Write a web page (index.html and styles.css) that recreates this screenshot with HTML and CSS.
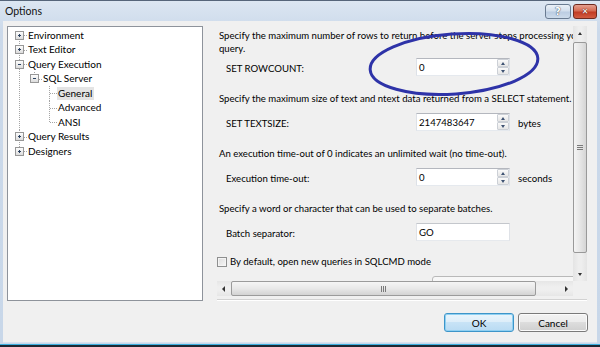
FILE: index.html
```html
<!DOCTYPE html>
<html lang="en">
<head>
    <meta charset="UTF-8">
    <title>Options</title>
    <link rel="stylesheet" href="styles.css">
</head>
<body>

<div class="window">
    <div class="titlebar">
        <span class="title">Options</span>
        <div class="caption-buttons">
            <span class="cap-btn help">?</span>
            <span class="cap-btn close">&#x2715;</span>
        </div>
    </div>

    <div class="client">
        <div class="main">
            <!-- Options tree -->
            <ul class="tree">
                <li><div class="row"><span class="exp plus"></span><span class="label">Environment</span></div></li>
                <li><div class="row"><span class="exp plus"></span><span class="label">Text Editor</span></div></li>
                <li>
                    <div class="row"><span class="exp minus"></span><span class="label">Query Execution</span></div>
                    <ul>
                        <li>
                            <div class="row"><span class="exp minus"></span><span class="label">SQL Server</span></div>
                            <ul>
                                <li><div class="row"><span class="exp"></span><span class="label selected">General</span></div></li>
                                <li><div class="row"><span class="exp"></span><span class="label">Advanced</span></div></li>
                                <li><div class="row"><span class="exp"></span><span class="label">ANSI</span></div></li>
                            </ul>
                        </li>
                    </ul>
                </li>
                <li><div class="row"><span class="exp plus"></span><span class="label">Query Results</span></div></li>
                <li><div class="row"><span class="exp plus"></span><span class="label">Designers</span></div></li>
            </ul>

            <!-- Settings page -->
            <div class="panel">
                <div class="view">
                    <div class="content">
                        <div class="desc first">Specify the maximum number of rows to return before the server stops processing your<br>query.</div>
                        <div class="field first">
                            <span class="field-label">SET ROWCOUNT:</span>
                            <div class="textbox"><span>0</span><span class="spin"><span class="spin-btn"><i class="tri up"></i></span><span class="spin-btn"><i class="tri down"></i></span></span></div>
                        </div>

                        <div class="desc">Specify the maximum size of text and ntext data returned from a SELECT statement.</div>
                        <div class="field">
                            <span class="field-label">SET TEXTSIZE:</span>
                            <div class="textbox"><span>2147483647</span><span class="spin"><span class="spin-btn"><i class="tri up"></i></span><span class="spin-btn"><i class="tri down"></i></span></span></div>
                            <span class="unit">bytes</span>
                        </div>

                        <div class="desc">An execution time-out of 0 indicates an unlimited wait (no time-out).</div>
                        <div class="field">
                            <span class="field-label">Execution time-out:</span>
                            <div class="textbox"><span>0</span><span class="spin"><span class="spin-btn"><i class="tri up"></i></span><span class="spin-btn"><i class="tri down"></i></span></span></div>
                            <span class="unit">seconds</span>
                        </div>

                        <div class="desc">Specify a word or character that can be used to separate batches.</div>
                        <div class="field">
                            <span class="field-label">Batch separator:</span>
                            <div class="textbox plain"><span>GO</span></div>
                        </div>

                        <div class="check-row">
                            <span class="checkbox"></span>
                            <span>By default, open new queries in SQLCMD mode</span>
                        </div>
                        <div class="combo"></div>
                    </div>

                    <div class="vscroll">
                        <span class="sb-btn"><i class="tri up dark"></i></span>
                        <span class="vthumb"><span class="grip-v"></span></span>
                        <span class="sb-fill"></span>
                        <span class="sb-btn"><i class="tri down dark"></i></span>
                    </div>
                </div>

                <div class="hscroll-row">
                    <div class="hscroll">
                        <span class="sb-btn h"><i class="tri left"></i></span>
                        <span class="hthumb"><span class="grip-h"></span></span>
                        <span class="sb-fill"></span>
                        <span class="sb-btn h"><i class="tri right"></i></span>
                    </div>
                    <div class="corner"></div>
                </div>
                <div class="separator"></div>
            </div>
        </div>

        <div class="footer">
            <button class="btn default">OK</button>
            <button class="btn">Cancel</button>
        </div>
    </div>

    <!-- hand-drawn highlight -->
    <svg class="marker" width="190" height="80" viewBox="0 0 190 80">
        <ellipse cx="94" cy="40" rx="84" ry="30" transform="rotate(-4 94 40)" fill="none" stroke="#2e33a8" stroke-width="3"/>
    </svg>
</div>

</body>
</html>
```

FILE: styles.css
```css
* {
    box-sizing: border-box;
}

html, body {
    margin: 0;
    padding: 0;
}

body {
    width: 600px;
    height: 347px;
    overflow: hidden;
    background: #1d2833;
    font-family: Lato, "Noto Sans", sans-serif;
    font-size: 9.6px;
    color: #000;
}

.window {
    position: relative;
    height: 345px;
    display: flex;
    flex-direction: column;
    background: linear-gradient(#dce6f2, #cbd9ea 30px, #c8d7e9);
    border-top: 1px solid #56657a;
    border-bottom: 1px solid #3aaede;
}

/* Title bar */
.titlebar {
    height: 20px;
    display: flex;
    align-items: center;
    padding: 0 3px 0 5px;
}

.title {
    font-size: 10.5px;
    color: #111;
}

.caption-buttons {
    margin-left: auto;
    display: flex;
    gap: 2px;
    align-self: flex-start;
    margin-top: 3px;
}

.cap-btn {
    height: 15px;
    display: flex;
    align-items: center;
    justify-content: center;
    border-radius: 3px;
    font-family: "DejaVu Sans", sans-serif;
    font-weight: bold;
    color: #fff;
}

.cap-btn.help {
    width: 26px;
    border: 1px solid #6a7b91;
    background: linear-gradient(#eaf0f7, #d3dfed 45%, #bccde2 55%, #cddbeb);
    font-size: 10px;
    text-shadow: 0 0 1px #3e4d61, 0 0 1px #3e4d61;
}

.cap-btn.close {
    width: 24px;
    border: 1px solid #6e2a1f;
    background: linear-gradient(#e5a090, #d56b53 45%, #c23c24 55%, #d25c41);
    font-size: 8px;
    text-shadow: 0 0 1px #5a1c12, 0 0 1px #5a1c12;
}

/* Client area */
.client {
    flex: 1;
    margin: 0 3px 1px 3px;
    background: #f0f0f0;
    padding: 5px 10px 0 4px;
    border-bottom: 1px solid #d6e2ef;
    display: flex;
    flex-direction: column;
}

.main {
    display: flex;
    height: 275px;
}

/* Tree view */
.tree, .tree ul {
    list-style: none;
    margin: 0;
    padding: 0;
}

.tree {
    width: 196px;
    flex: none;
    margin-right: 14px;
    background: #fff;
    border: 1px solid #8e939b;
    padding: 1px 0 0 4px;
}

.tree ul {
    padding-left: 15px;
}

.tree li {
    background: repeating-linear-gradient(#a5a5a5 0 1px, transparent 1px 2px) 7px 0 / 1px 100% no-repeat;
}

.tree > li:first-child {
    background-position: 7px 7px;
}

.tree li:last-child {
    background-size: 1px 7px;
}

.row {
    height: 14.5px;
    display: flex;
    align-items: center;
    background: repeating-linear-gradient(to right, #a5a5a5 0 1px, transparent 1px 2px) 8px 7px / 7px 1px no-repeat;
}

.exp {
    width: 15px;
    height: 100%;
    flex: none;
    display: flex;
    align-items: center;
    justify-content: center;
}

.exp.plus::before,
.exp.minus::before {
    content: "";
    width: 7px;
    height: 7px;
    margin-left: -1px;
    border: 1px solid #979797;
    background:
        linear-gradient(#2b4160, #2b4160) center / 3px 1px no-repeat,
        linear-gradient(#fdfdfd, #dcdcdc);
}

.exp.plus::before {
    background:
        linear-gradient(#2b4160, #2b4160) center / 3px 1px no-repeat,
        linear-gradient(#2b4160, #2b4160) center / 1px 3px no-repeat,
        linear-gradient(#fdfdfd, #dcdcdc);
}

.label {
    padding: 0 2px 0 1px;
    line-height: 13px;
    font-size: 10px;
    white-space: nowrap;
}

.label.selected {
    background: #e4e4e4;
}

/* Right panel */
.panel {
    flex: 1;
    display: flex;
    flex-direction: column;
    min-width: 0;
}

.view {
    height: 255px;
    display: flex;
}

.content {
    flex: 1;
    min-width: 0;
    overflow: hidden;
    padding: 3px 0 0 2px;
    white-space: nowrap;
}

.desc {
    line-height: 13px;
    margin-top: 16px;
}

.desc.first {
    margin-top: 0;
}

.field {
    display: flex;
    align-items: center;
    height: 18px;
    margin-top: 8px;
    padding-left: 7px;
}

.field.first {
    margin-top: 3px;
}

.field-label {
    width: 190px;
    flex: none;
    padding-top: 2px;
}

.textbox {
    width: 94px;
    height: 18px;
    flex: none;
    display: flex;
    align-items: center;
    padding-left: 2px;
    background: #fff;
    border: 1px solid;
    border-color: #b4b7be #dde1e7 #e5e9ee #dde1e7;
}

.textbox.plain {
    border-color: #c4c7cc #dfe2e7 #e6e9ed #dfe2e7;
}

.spin {
    margin-left: auto;
    display: flex;
    flex-direction: column;
    height: 16px;
}

.spin-btn {
    width: 12px;
    height: 8px;
    display: flex;
    align-items: center;
    justify-content: center;
    border: 1px solid #ccd0d6;
    border-radius: 1px;
    background: linear-gradient(#fafafa, #e6e6e6);
}

.unit {
    margin-left: 8px;
    padding-top: 2px;
}

.tri {
    width: 0;
    height: 0;
    border: 0 solid transparent;
}

.tri.up {
    border-width: 0 2.5px 3px;
    border-bottom-color: #3e5273;
}

.tri.down {
    border-width: 3px 2.5px 0;
    border-top-color: #3e5273;
}

.tri.left {
    border-width: 3px 3px 3px 0;
    border-right-color: #333;
}

.tri.right {
    border-width: 3px 0 3px 3px;
    border-left-color: #333;
}

.tri.dark.up { border-bottom-color: #333; }
.tri.dark.down { border-top-color: #333; }

.check-row {
    display: flex;
    align-items: center;
    gap: 3px;
    height: 13px;
    margin: 14px 0 0 -2px;
}

.checkbox {
    width: 10px;
    height: 10px;
    border: 1px solid #8e8f8f;
    background: linear-gradient(135deg, #dcdcdc, #f6f6f6);
    box-shadow: inset 0 0 0 1px #f4f4f4;
}

.combo {
    width: 150px;
    height: 20px;
    margin: 8px 0 0 213px;
    border: 1px solid #b9b9b9;
    border-radius: 3px;
    background: #f7f7f7;
}

/* Scroll bars */
.vscroll {
    width: 14px;
    flex: none;
    display: flex;
    flex-direction: column;
    background: linear-gradient(to right, #e4e4e4, #eeeeee 40%, #eeeeee 60%, #e4e4e4);
}

.sb-btn {
    height: 14px;
    flex: none;
    display: flex;
    align-items: center;
    justify-content: center;
}

.sb-btn.h {
    width: 13px;
    height: auto;
}

.sb-fill {
    flex: 1;
}

.vthumb {
    height: 211px;
    margin-top: 2px;
    flex: none;
    display: flex;
    align-items: center;
    justify-content: center;
    border: 1px solid #999;
    border-radius: 2px;
    background: linear-gradient(to right, #f4f4f4, #e6e6e6 50%, #d5d5d5);
}

.grip-v {
    width: 6px;
    height: 5px;
    border-top: 1px solid #7a7a7a;
    border-bottom: 1px solid #7a7a7a;
    background: linear-gradient(#7a7a7a, #7a7a7a) center / 100% 1px no-repeat;
}

.hscroll-row {
    height: 15px;
    display: flex;
}

.hscroll {
    flex: 1;
    display: flex;
    background: linear-gradient(#e6e6e6, #efefef 40%, #efefef 60%, #e6e6e6);
}

.hthumb {
    width: 305px;
    margin-left: 1px;
    flex: none;
    display: flex;
    align-items: center;
    justify-content: center;
    border: 1px solid #9b9b9b;
    border-radius: 2px;
    background: linear-gradient(#f5f5f5, #e8e8e8 50%, #d3d3d3);
}

.grip-h {
    width: 5px;
    height: 6px;
    border-left: 1px solid #7a7a7a;
    border-right: 1px solid #7a7a7a;
    background: linear-gradient(#7a7a7a, #7a7a7a) center / 1px 100% no-repeat;
}

.corner {
    width: 14px;
    background: #f0f0f0;
}

.separator {
    margin-top: 3px;
    border-top: 1px solid #d2d2d2;
    border-bottom: 1px solid #fff;
}

/* Dialog buttons */
.footer {
    display: flex;
    justify-content: flex-end;
    gap: 4px;
    padding-top: 12px;
    margin-right: -1px;
}

.btn {
    width: 70px;
    height: 19px;
    padding: 0;
    font-family: inherit;
    font-size: 10px;
    color: #000;
    border: 1px solid #7a7a7a;
    border-radius: 3px;
    background: linear-gradient(#f3f3f3, #ebebeb 50%, #dddddd 50%, #cfcfcf);
    box-shadow: inset 0 0 0 1px #fbfbfb;
}

.btn.default {
    border-color: #3d95c9;
    background: linear-gradient(#eaf5fc, #dcedf9 50%, #c8e3f6 50%, #b9dbf3);
    box-shadow: inset 0 0 0 1px #8fd0f2;
}

/* Highlight drawn over the page */
.marker {
    position: absolute;
    left: 360px;
    top: 23px;
    pointer-events: none;
}
```
